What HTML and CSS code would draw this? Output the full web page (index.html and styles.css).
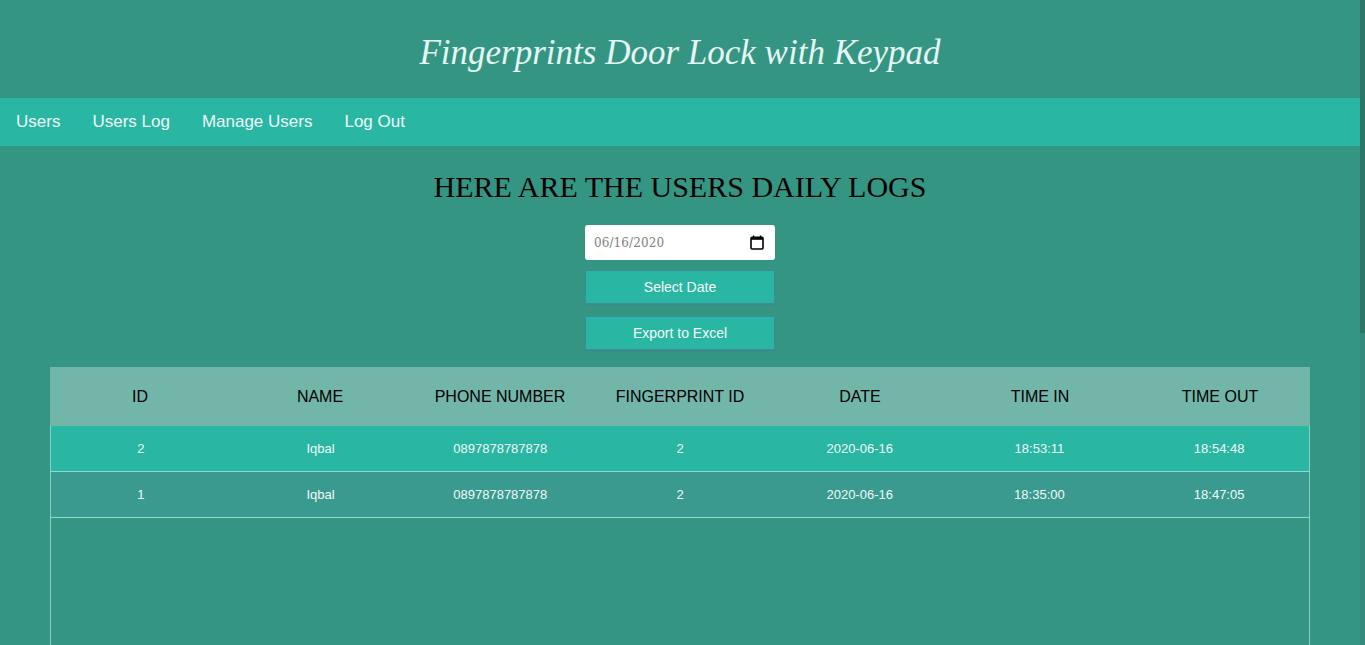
FILE: index.html
```html
<!DOCTYPE html>
<html>
<head>
<meta charset="utf-8">
<link rel="stylesheet" href="styles.css">
</head>
<body>
<header class="top">
  <h1 class="title">Fingerprints Door Lock with Keypad</h1>
</header>
<nav class="nav">
  <a href="#">Users</a>
  <a href="#">Users Log</a>
  <a href="#">Manage Users</a>
  <a href="#">Log Out</a>
</nav>
<main class="main">
  <h2 class="heading">HERE ARE THE USERS DAILY LOGS</h2>
  <form class="controls">
    <div class="date-input">
      <span class="date-text">06/16/2020</span>
      <svg class="cal" width="14" height="15" viewBox="0 0 14 15"><path d="M3.5 0.5v2.5M10.5 0.5v2.5" stroke="#000" stroke-width="1.4"/><rect x="1" y="2.2" width="12" height="11.8" rx="1.2" fill="none" stroke="#000" stroke-width="1.6"/><rect x="1" y="2.2" width="12" height="2.6" fill="#000"/></svg>
    </div>
    <button type="button" class="btn">Select Date</button>
    <button type="button" class="btn">Export to Excel</button>
  </form>
  <div class="table-wrap">
    <div class="thead">
      <div>ID</div><div>NAME</div><div>PHONE NUMBER</div><div>FINGERPRINT ID</div><div>DATE</div><div>TIME IN</div><div>TIME OUT</div>
    </div>
    <div class="tbody">
      <div class="row r1">
        <div>2</div><div>Iqbal</div><div>0897878787878</div><div>2</div><div>2020-06-16</div><div>18:53:11</div><div>18:54:48</div>
      </div>
      <div class="row r2">
        <div>1</div><div>Iqbal</div><div>0897878787878</div><div>2</div><div>2020-06-16</div><div>18:35:00</div><div>18:47:05</div>
      </div>
    </div>
  </div>
</main>
<div class="scrollbar"><div class="thumb"></div></div>
</body>
</html>
```
FILE: styles.css
```css
html {
  background: #359583;
}
html, body {
  margin: 0;
  padding: 0;
}
body {
  font-family: "Liberation Sans", Arial, sans-serif;
  margin-right: 5px;
  background: #359583;
}
.scrollbar {
  position: fixed;
  top: 0;
  right: 0;
  width: 5px;
  height: 100vh;
  background: #338b7d;
}
.thumb {
  height: 333px;
  background: #2d7567;
}
.top {
  height: 98px;
  display: flex;
  align-items: center;
  justify-content: center;
}
.title {
  margin: 0;
  font-family: "Liberation Serif", "Times New Roman", serif;
  font-style: italic;
  font-weight: normal;
  font-size: 35px;
  color: #e6f7f3;
  position: relative;
  top: 4px;
}
.nav {
  height: 48px;
  background: #29b6a3;
  display: flex;
  align-items: center;
  padding-left: 16px;
  gap: 32px;
}
.nav a {
  color: #eef9f7;
  text-decoration: none;
  font-size: 17px;
}
.main {
  padding-top: 24px;
}
.heading {
  margin: 0;
  text-align: center;
  font-family: "Liberation Serif", "Times New Roman", serif;
  font-weight: normal;
  font-size: 30px;
  color: #000;
  line-height: 34px;
}
.controls {
  display: flex;
  flex-direction: column;
  align-items: center;
  margin-top: 21px;
  gap: 12px;
}
.date-input {
  width: 190px;
  height: 35px;
  box-sizing: border-box;
  background: #fff;
  border-radius: 3px;
  display: flex;
  align-items: center;
  justify-content: space-between;
  padding: 0 11px 0 9px;
}
.date-text {
  font-family: "DejaVu Serif", serif;
  font-size: 12px;
  color: #808080;
  letter-spacing: 0.1px;
}
.cal { display: block; }
.btn {
  width: 190px;
  height: 34px;
  box-sizing: border-box;
  background: #29b6a3;
  border: 1px solid #3b8d9c;
  box-shadow: 0 2px 0 #3a8c86;
  color: #f3fbfa;
  font-family: "Liberation Sans", Arial, sans-serif;
  font-size: 14px;
  padding: 0;
  margin: 0;
}
.date-input + .btn { margin-top: -2px; }
.table-wrap {
  margin: 17px 50px 0;
}
.thead {
  display: grid;
  grid-template-columns: repeat(7, 1fr);
  height: 59px;
  align-items: center;
  background: #72b5a9;
  color: #000;
  font-size: 16px;
  text-align: center;
}
.tbody {
  border-left: 1px solid #86d0c5;
  border-right: 1px solid #86d0c5;
  height: 830px;
}
.row {
  display: grid;
  grid-template-columns: repeat(7, 1fr);
  height: 45px;
  align-items: center;
  text-align: center;
  font-size: 13px;
  color: #f1faf8;
  border-bottom: 1px solid #8fdccf;
}
.r1 { background: #29b6a3; }
.r2 { background: #3a9a8f; }
```
